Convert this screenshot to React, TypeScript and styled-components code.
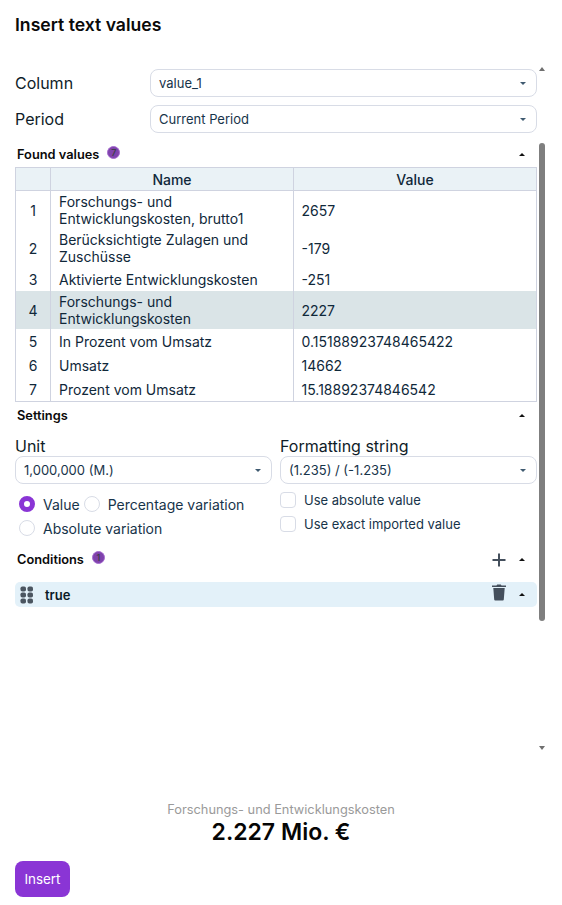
import React from "react";
import styled, { createGlobalStyle } from "styled-components";

const Global = createGlobalStyle`
  html, body { margin: 0; padding: 0; background: #fff; }
  body { font-family: Inter, "Liberation Sans", sans-serif; color: #0b2233; }
  * { box-sizing: border-box; }
`;

const Page = styled.div`
  position: relative;
  width: 562px;
  height: 905px;
  padding: 0 25px 0 15px;
  display: flex;
  flex-direction: column;
  overflow: hidden;
`;
const Title = styled.h1`
  margin: 15px 0 0;
  height: 20px;
  font-size: 17.6px;
  line-height: 20px;
  font-weight: 600;
  color: #0a0a0a;
`;
const Body = styled.div`
  margin-top: 34px;
  height: 733px;
  display: flex;
  flex-direction: column;
`;
const FieldRow = styled.div`
  display: grid;
  grid-template-columns: 135px 1fr;
  align-items: center;
  margin-bottom: 8px;
  font-size: 16px;
  color: #0f1c28;
`;
const SelectBox = styled.div`
  height: 28px;
  border: 1px solid #d8dce6;
  border-radius: 8px;
  padding: 0 10px 0 8px;
  display: flex;
  align-items: center;
  justify-content: space-between;
  font-size: 13px;
  color: #17344a;
  background: #fff;
`;
const Caret = styled.span<{ $up?: boolean; $color?: string }>`
  width: 0;
  height: 0;
  border-left: 3.5px solid transparent;
  border-right: 3.5px solid transparent;
  ${(p) => (p.$up ? "border-bottom" : "border-top")}: 3.5px solid ${(p) => p.$color || "#3f5a70"};
`;
const SectionHead = styled.div<{ $h: number }>`
  height: ${(p) => p.$h}px;
  display: flex;
  align-items: center;
  padding: 0 12px 0 2px;
  font-size: 12.8px;
  font-weight: 600;
  color: #0a0a0a;
`;
const SectionName = styled.span`
  margin-right: 8px;
`;
const Badge = styled.span`
  width: 13px;
  height: 13px;
  border-radius: 50%;
  border: 1px solid #a56bd0;
  background: #7f42ac;
  color: #3f3d4c;
  font-size: 9px;
  font-weight: 600;
  line-height: 11px;
  text-align: center;
  margin-top: -3px;
`;
const Spacer = styled.span`
  flex: 1;
`;
const Table = styled.table`
  width: 100%;
  border-collapse: collapse;
  table-layout: fixed;
  border: 1px solid #cfd3e0;
  font-size: 14px;
  color: #10283a;
`;
const Th = styled.th<{ $w?: number }>`
  height: 23px;
  width: ${(p) => (p.$w ? `${p.$w}px` : "auto")};
  background: #eaf2f6;
  border: 1px solid #cfd3e0;
  font-weight: 500;
  font-size: 14px;
  padding: 0;
`;
const Tr = styled.tr<{ $sel?: boolean }>`
  background: ${(p) => (p.$sel ? "#dae4e7" : "#fff")};
  &:last-child td { height: 25px; }
`;
const TdIndex = styled.td`
  text-align: center;
  padding: 1px 0 0;
  border-right: 1px solid #cfd3e0;
`;
const Td = styled.td<{ $double?: boolean }>`
  height: ${(p) => (p.$double ? 38 : 24)}px;
  padding: 1px 8px 0;
  line-height: 17px;
  border-right: 1px solid #cfd3e0;
`;
const ValueTd = styled(Td)`
  padding-left: 7.5px;
`;
const SettingsGrid = styled.div`
  display: grid;
  grid-template-columns: 1fr 1fr;
  column-gap: 8px;
  margin-top: 7px;
`;
const Col = styled.div`
  display: flex;
  flex-direction: column;
`;
const FieldLabel = styled.div`
  font-size: 16px;
  line-height: 20px;
  color: #0f1c28;
`;
const Options = styled.div`
  margin-top: 8px;
  display: flex;
  flex-wrap: wrap;
  font-size: 14px;
  color: #17344a;
`;
const RadioItem = styled.label`
  display: flex;
  align-items: center;
  height: 24px;
  padding-left: 4px;
  &:last-child { width: 100%; }
`;
const RadioDot = styled.span<{ $on?: boolean }>`
  width: 16px;
  height: 16px;
  border-radius: 50%;
  margin-right: 8px;
  background: #fff;
  border: ${(p) => (p.$on ? "5px solid #8a35d5" : "1px solid #d8dce6")};
`;
const CheckItem = styled.label`
  display: flex;
  align-items: center;
  height: 24px;
  font-size: 13px;
  color: #17344a;
`;
const CheckGroup = styled.div`
  margin-top: 4px;
  display: flex;
  flex-direction: column;
`;
const CheckBox = styled.span`
  width: 16px;
  height: 16px;
  border: 1px solid #d8dce6;
  border-radius: 4px;
  margin-right: 8px;
`;
const IconButton = styled.span`
  display: flex;
  margin-right: 12px;
  color: #444f5c;
`;
const PlusButton = styled(IconButton)`
  margin-top: 2px;
`;
const TrashButton = styled(IconButton)`
  margin-top: -5px;
`;
const ConditionRow = styled.div`
  height: 25px;
  margin-top: 4px;
  border-radius: 5px;
  background: #e3f1f9;
  display: flex;
  align-items: center;
  padding: 0 12px 0 5px;
  font-size: 13px;
  font-weight: 600;
  color: #0a1a26;
`;
const Grip = styled.svg`
  margin-right: 10px;
`;
const ScrollThumb = styled.div`
  position: absolute;
  left: 539px;
  top: 143px;
  width: 6px;
  height: 478px;
  border-radius: 3px;
  background: #7f7f7f;
`;
const ScrollArrow = styled.span<{ $top: number; $up?: boolean }>`
  position: absolute;
  left: 539px;
  top: ${(p) => p.$top}px;
  width: 0;
  height: 0;
  border-left: 3px solid transparent;
  border-right: 3px solid transparent;
  ${(p) => (p.$up ? "border-bottom" : "border-top")}: 4px solid #6f6f6f;
`;
const Preview = styled.div`
  text-align: center;
  margin-right: -25px;
  margin-left: -15px;
`;
const PreviewLabel = styled.div`
  font-size: 12.8px;
  line-height: 16px;
  color: #9a9a9a;
`;
const PreviewValue = styled.div`
  font-size: 23px;
  line-height: 28px;
  font-weight: 600;
  color: #050505;
`;
const InsertButton = styled.button`
  margin-top: 15px;
  width: 55px;
  height: 36px;
  border: 0;
  border-radius: 8px;
  background: #8a35d5;
  color: #fff;
  font: 400 13.4px Inter, sans-serif;
  padding: 0;
`;

const rows: [string, string, boolean][] = [
  ["Forschungs- und Entwicklungskosten, brutto1", "2657", true],
  ["Berücksichtigte Zulagen und Zuschüsse", "-179", true],
  ["Aktivierte Entwicklungskosten", "-251", false],
  ["Forschungs- und Entwicklungskosten", "2227", true],
  ["In Prozent vom Umsatz", "0.15188923748465422", false],
  ["Umsatz", "14662", false],
  ["Prozent vom Umsatz", "15.18892374846542", false],
];

export default function App() {
  return (
    <Page>
      <Global />
      <Title>Insert text values</Title>
      <Body>
        <FieldRow>
          <span>Column</span>
          <SelectBox>value_1<Caret /></SelectBox>
        </FieldRow>
        <FieldRow>
          <span>Period</span>
          <SelectBox>Current Period<Caret /></SelectBox>
        </FieldRow>
        <SectionHead $h={26}>
          <SectionName>Found values</SectionName>
          <Badge>7</Badge>
          <Spacer />
          <Caret $up $color="#111" />
        </SectionHead>
        <Table>
          <thead>
            <tr>
              <Th $w={35} />
              <Th $w={243}>Name</Th>
              <Th>Value</Th>
            </tr>
          </thead>
          <tbody>
            {rows.map(([name, value, dbl], i) => (
              <Tr key={name} $sel={i === 3}>
                <TdIndex>{i + 1}</TdIndex>
                <Td $double={dbl}>{name}</Td>
                <ValueTd>{value}</ValueTd>
              </Tr>
            ))}
          </tbody>
        </Table>
        <SectionHead $h={27}>
          <SectionName>Settings</SectionName>
          <Spacer />
          <Caret $up $color="#111" />
        </SectionHead>
        <SettingsGrid>
          <Col>
            <FieldLabel>Unit</FieldLabel>
            <SelectBox>1,000,000 (M.)<Caret /></SelectBox>
            <Options>
              <RadioItem><RadioDot $on />Value</RadioItem>
              <RadioItem><RadioDot />Percentage variation</RadioItem>
              <RadioItem><RadioDot />Absolute variation</RadioItem>
            </Options>
          </Col>
          <Col>
            <FieldLabel>Formatting string</FieldLabel>
            <SelectBox>(1.235) / (-1.235)<Caret /></SelectBox>
            <CheckGroup>
              <CheckItem><CheckBox />Use absolute value</CheckItem>
              <CheckItem><CheckBox />Use exact imported value</CheckItem>
            </CheckGroup>
          </Col>
        </SettingsGrid>
        <SectionHead $h={38}>
          <SectionName>Conditions</SectionName>
          <Badge>1</Badge>
          <Spacer />
          <PlusButton>
            <svg width="16" height="16" viewBox="0 0 16 16">
              <path d="M8 1.500v13M1.500 8h13" stroke="currentColor" strokeWidth="2" />
            </svg>
          </PlusButton>
          <Caret $up $color="#111" />
        </SectionHead>
        <ConditionRow>
          <Grip width="15" height="18" viewBox="0 0 15 18" fill="#4b5560">
            <rect x="0.500" y="0.500" width="5.500" height="5" rx="1.800" />
            <rect x="7.500" y="0.500" width="5.500" height="5" rx="1.800" />
            <rect x="0.500" y="6.500" width="5.500" height="5" rx="1.800" />
            <rect x="7.500" y="6.500" width="5.500" height="5" rx="1.800" />
            <rect x="0.500" y="12.500" width="5.500" height="5" rx="1.800" />
            <rect x="7.500" y="12.500" width="5.500" height="5" rx="1.800" />
          </Grip>
          true
          <Spacer />
          <TrashButton>
            <svg width="16" height="18" viewBox="0 0 16 18" fill="currentColor">
              <path d="M1 2.500h4.500l.7-1h3.600l.7 1H15V4H1zM2.300 5h11.400l-.9 11.500a1 1 0 0 1-1 1H4.200a1 1 0 0 1-1-1z" />
            </svg>
          </TrashButton>
          <Caret $up $color="#111" />
        </ConditionRow>
      </Body>
      <Preview>
        <PreviewLabel>Forschungs- und Entwicklungskosten</PreviewLabel>
        <PreviewValue>2.227 Mio. €</PreviewValue>
      </Preview>
      <div>
        <InsertButton>Insert</InsertButton>
      </div>
      <ScrollArrow $top={67} $up />
      <ScrollThumb />
      <ScrollArrow $top={746} />
    </Page>
  );
}
